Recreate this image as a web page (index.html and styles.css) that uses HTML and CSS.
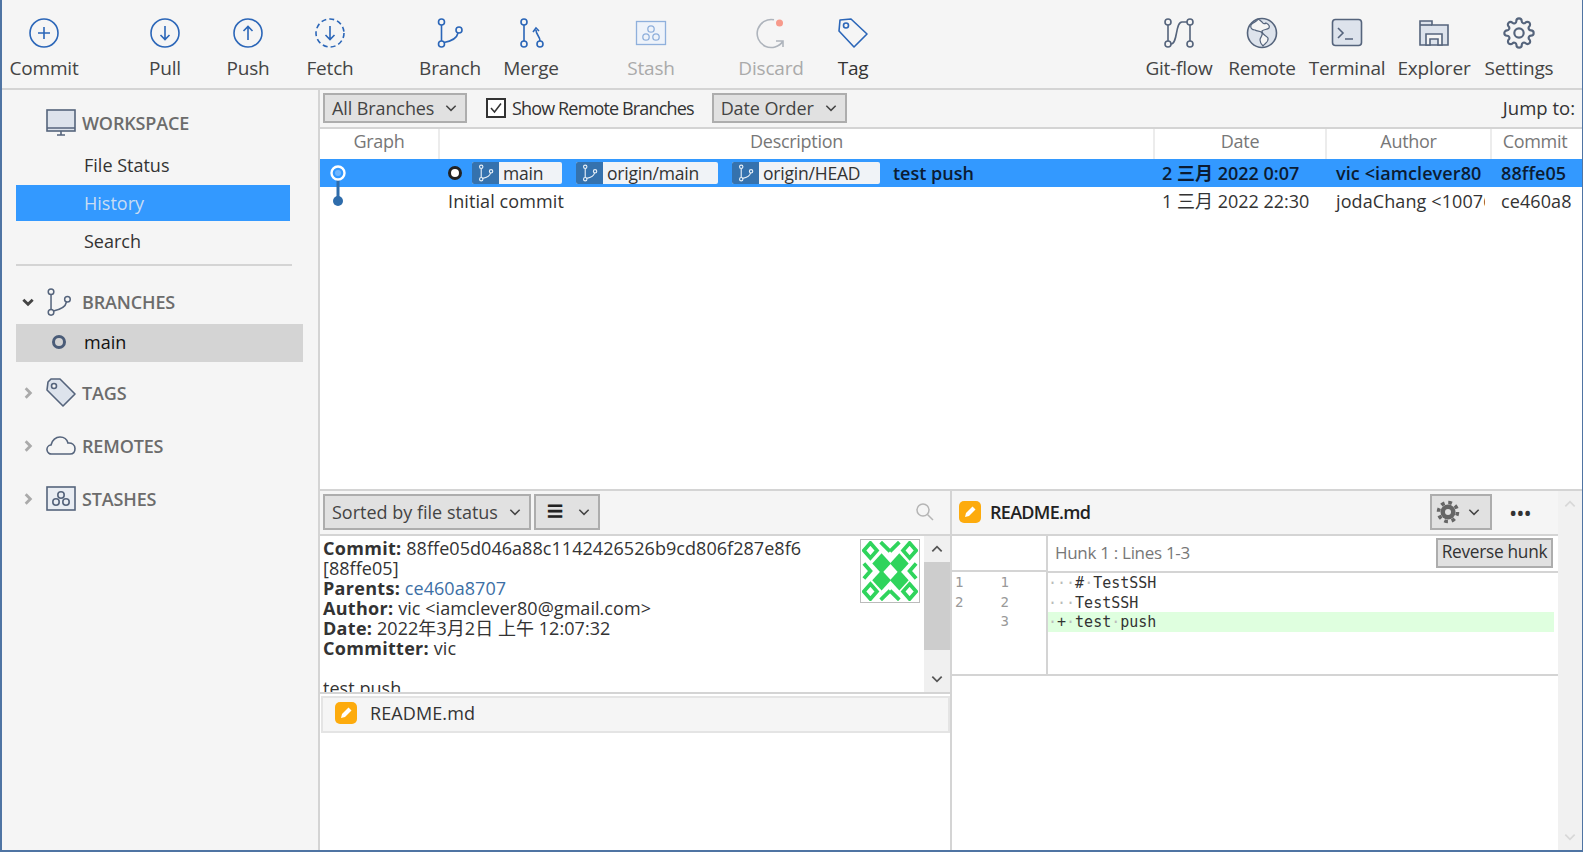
FILE: index.html
```html
<!DOCTYPE html>
<html lang="zh-Hant">
<head>
<meta charset="utf-8">
<title>Sourcetree</title>
<link rel="stylesheet" href="styles.css">
</head>
<body>
<svg class="defs" width="0" height="0" aria-hidden="true">
  <symbol id="branch" viewBox="0 0 32 32">
    <circle cx="7.500" cy="5" r="3"/><circle cx="7.500" cy="27" r="3"/><circle cx="25" cy="13" r="3"/>
    <path d="M7.500 8v16M10 25.500C18 24 23 21 24 16"/>
  </symbol>
  <symbol id="gear" viewBox="0 0 24 24">
    <path d="M19.400 15a1.650 1.650 0 0 0 .33 1.820l.06.06a2 2 0 0 1 0 2.830 2 2 0 0 1-2.830 0l-.06-.06a1.650 1.650 0 0 0-1.820-.33 1.650 1.650 0 0 0-1 1.510V21a2 2 0 0 1-2 2 2 2 0 0 1-2-2v-.09A1.650 1.650 0 0 0 9 19.400a1.650 1.650 0 0 0-1.820.33l-.06.06a2 2 0 0 1-2.830 0 2 2 0 0 1 0-2.830l.06-.06a1.650 1.650 0 0 0 .33-1.820 1.650 1.650 0 0 0-1.510-1H3a2 2 0 0 1-2-2 2 2 0 0 1 2-2h.09A1.650 1.650 0 0 0 4.600 9a1.650 1.650 0 0 0-.33-1.820l-.06-.06a2 2 0 0 1 0-2.830 2 2 0 0 1 2.830 0l.06.06a1.650 1.650 0 0 0 1.820.33H9a1.650 1.650 0 0 0 1-1.510V3a2 2 0 0 1 2-2 2 2 0 0 1 2 2v.09a1.650 1.650 0 0 0 1 1.510 1.650 1.650 0 0 0 1.820-.33l.06-.06a2 2 0 0 1 2.830 0 2 2 0 0 1 0 2.830l-.06.06a1.650 1.650 0 0 0-.33 1.820V9a1.650 1.650 0 0 0 1.510 1H21a2 2 0 0 1 2 2 2 2 0 0 1-2 2h-.09a1.650 1.650 0 0 0-1.510 1z"/>
  </symbol>
  <symbol id="chev-down" viewBox="0 0 12 12"><path d="M2 4l4 4 4-4"/></symbol>
  <symbol id="chev-right" viewBox="0 0 12 12"><path d="M4 2l4 4-4 4"/></symbol>
  <symbol id="pencil" viewBox="0 0 22 22">
    <rect x="0" y="0" width="22" height="22" rx="5" fill="#fdab0d"/>
    <path d="M6 16l1-4 6.500-6.500 3 3L10 15z" fill="#fff"/>
  </symbol>
  <symbol id="stashes" viewBox="0 0 30 26">
    <rect x="1" y="1" width="28" height="23"/>
    <circle cx="15" cy="9" r="3.200"/><circle cx="10" cy="16" r="3.200"/><circle cx="20" cy="16" r="3.200"/>
  </symbol>
</svg>

<div class="app">
  <header class="toolbar">
    <div class="tool"><svg class="tool-icon blue" viewBox="0 0 32 32"><circle cx="16" cy="16" r="14"/><path d="M16 10v12M10 16h12"/></svg><span>Commit</span></div>
    <div class="tool gap-wide"><svg class="tool-icon blue" viewBox="0 0 32 32"><circle cx="16" cy="16" r="14"/><path d="M16 9v13M11.500 18l4.500 4.500 4.500-4.500"/></svg><span>Pull</span></div>
    <div class="tool gap-3"><svg class="tool-icon blue" viewBox="0 0 32 32"><circle cx="16" cy="16" r="14"/><path d="M16 23V10M11.500 14l4.500-4.500 4.500 4.500"/></svg><span>Push</span></div>
    <div class="tool gap-2"><svg class="tool-icon blue" viewBox="0 0 32 32"><circle cx="16" cy="16" r="14" stroke-dasharray="5 3.100"/><path d="M16 9v13M11.500 18l4.500 4.500 4.500-4.500"/></svg><span>Fetch</span></div>
    <div class="tool gap-group"><svg class="tool-icon blue"><use href="#branch"/></svg><span>Branch</span></div>
    <div class="tool gap-1"><svg class="tool-icon blue" viewBox="0 0 32 32"><circle cx="9" cy="5" r="3"/><circle cx="9" cy="27" r="3"/><circle cx="25" cy="27" r="3"/><path d="M9 8v16M25 24c0-5-4-6-4-11M18 15l3-4 3 3"/></svg><span>Merge</span></div>
    <div class="tool gap-group disabled"><svg class="tool-icon pale" viewBox="0 0 32 32"><rect x="1.500" y="4.500" width="29" height="23" fill="#eef3fa"/><circle cx="16" cy="12" r="3.200"/><circle cx="11" cy="20" r="3.200"/><circle cx="21" cy="20" r="3.200"/></svg><span>Stash</span></div>
    <div class="tool gap-group disabled"><svg class="tool-icon grey" viewBox="0 0 32 32"><path d="M19 2.800A14 14 0 1 0 28 24M28 30v-6h-7"/><circle class="dot" cx="24.500" cy="6" r="3.500"/></svg><span>Discard</span></div>
    <div class="tool gap-2 tag-tool"><svg class="tool-icon blue" viewBox="0 0 32 32"><path d="M3 3l11-1 16 15-13 13L2 14z" stroke-linejoin="round"/><circle cx="9" cy="8.500" r="2.500"/></svg><span>Tag</span></div>
    <div class="tool push-right"><svg class="tool-icon slate" viewBox="0 0 32 32"><circle cx="5" cy="5" r="3"/><circle cx="5" cy="27" r="3"/><circle cx="27" cy="5" r="3"/><circle cx="27" cy="27" r="3"/><path d="M5 8v16M27 8v16M8 27c7 0 4-22 11-22h5"/></svg><span>Git-flow</span></div>
    <div class="tool gap-3"><svg class="tool-icon slate" viewBox="0 0 32 32"><circle cx="16" cy="16" r="14.500" fill="#dde3ec"/><path class="solid" d="M12 2c-1 3-5 3-7 6-1 3 1 5 4 5 2 2 6 0 7 3 1 3-2 4-2 7s2 5 3 6c2-3 6-4 5-8-2-3-6-3-6-7 2-2 5-1 7-3 1-2-1-4-3-5-1 1-3 1-4-1-1-1-2-2-4-3z"/></svg><span>Remote</span></div>
    <div class="tool gap-5"><svg class="tool-icon slate" viewBox="0 0 32 32"><rect x="1.500" y="2.500" width="29" height="26" rx="3" fill="#dde3ec"/><path d="M7 11l5 5-5 5M14 22h8"/></svg><span>Terminal</span></div>
    <div class="tool gap-7"><svg class="tool-icon slate" viewBox="0 0 32 32"><path d="M2 28V4h12v4h16v20z" fill="#dde3ec"/><path d="M2 8h12"/><path class="fill-slate" d="M8 28V17h16v11h-4v-6h-8v6z"/></svg><span>Explorer</span></div>
    <div class="tool gap-5"><svg class="tool-icon slate" viewBox="0 0 24 24"><use href="#gear"/><circle cx="12" cy="12" r="3.500"/></svg><span>Settings</span></div>
  </header>

  <div class="main">
    <aside class="sidebar">
      <div class="side-head first">
        <span class="chev"></span>
        <svg class="side-icon slate" viewBox="0 0 30 28"><rect x="1" y="1" width="28" height="21" fill="#dde3ec"/><path d="M1 19h28M11 26h8M15 22v4"/></svg>
        <span>WORKSPACE</span>
      </div>
      <div class="nav-item file-status">File Status</div>
      <div class="nav-item active">History</div>
      <div class="nav-item search">Search</div>
      <div class="side-rule"></div>
      <div class="side-head branches">
        <svg class="chev down"><use href="#chev-down"/></svg>
        <svg class="side-icon slate branch-icon"><use href="#branch"/></svg>
        <span>BRANCHES</span>
      </div>
      <div class="branch-row"><span class="ring"></span><span>main</span></div>
      <div class="side-head tags">
        <svg class="chev"><use href="#chev-right"/></svg>
        <svg class="side-icon slate" viewBox="0 0 30 30"><path d="M2 4l3-3 9 0 15 15-12 12L1 12z" fill="#dde3ec" stroke-linejoin="round"/><circle cx="8" cy="8" r="2.500" fill="#f5f5f5"/></svg>
        <span>TAGS</span>
      </div>
      <div class="side-head remotes">
        <svg class="chev"><use href="#chev-right"/></svg>
        <svg class="side-icon slate" viewBox="0 0 30 20"><path d="M6 18a4.500 4.500 0 0 1-1-9C6 4 10 1 14 1c4 0 7 2.500 8 6 4-.5 7 2 7 5.500s-2 5.500-5 5.500z"/></svg>
        <span>REMOTES</span>
      </div>
      <div class="side-head stashes">
        <svg class="chev"><use href="#chev-right"/></svg>
        <svg class="side-icon slate filled"><use href="#stashes"/></svg>
        <span>STASHES</span>
      </div>
    </aside>

    <section class="content">
      <div class="filterbar">
        <div class="select all-branches">All Branches<svg class="caret"><use href="#chev-down"/></svg></div>
        <label class="check"><span class="box"><svg viewBox="0 0 16 16"><path d="M3 8l3.500 4L13 3.500"/></svg></span>Show Remote Branches</label>
        <div class="select date-order">Date Order<svg class="caret"><use href="#chev-down"/></svg></div>
        <span class="jump">Jump to:</span>
      </div>

      <div class="table">
        <div class="thead">
          <div>Graph</div><div>Description</div><div>Date</div><div>Author</div><div class="th-commit">Commit</div>
        </div>
        <div class="row selected">
          <div class="graph"><svg viewBox="0 0 36 28"><path d="M18 20v22"/><circle class="ring-w" cx="18" cy="14" r="6.500"/><circle class="core" cx="18" cy="14" r="3"/></svg></div>
          <div class="desc">
            <span class="head-dot"></span>
            <span class="tag t1"><span class="tag-ico"><svg><use href="#branch"/></svg></span>main</span>
            <span class="tag t2"><span class="tag-ico"><svg><use href="#branch"/></svg></span>origin/main</span>
            <span class="tag t3"><span class="tag-ico"><svg><use href="#branch"/></svg></span>origin/HEAD</span>
            <span class="msg">test push</span>
          </div>
          <div class="cell date">2 三月 2022 0:07</div>
          <div class="cell">vic &lt;iamclever80</div>
          <div class="cell">88ffe05</div>
        </div>
        <div class="row">
          <div class="graph"><svg viewBox="0 0 36 28"><circle class="node" cx="18" cy="14" r="5"/></svg></div>
          <div class="desc plain">Initial commit</div>
          <div class="cell date">1 三月 2022 22:30</div>
          <div class="cell author-clip">jodaChang &lt;1007654321@qq.com&gt;</div>
          <div class="cell">ce460a8</div>
        </div>
      </div>

      <div class="lower">
        <div class="left-pane">
          <div class="pane-bar">
            <div class="select sort">Sorted by file status<svg class="caret"><use href="#chev-down"/></svg></div>
            <div class="select view"><span class="lines">☰</span><svg class="caret"><use href="#chev-down"/></svg></div>
            <svg class="search-icon" viewBox="0 0 20 20"><circle cx="8" cy="8" r="6"/><path d="M12.500 12.500L18 18"/></svg>
          </div>
          <div class="details">
            <div class="details-text">
              <div class="avatar">
                <svg viewBox="0 0 60 64">
                  <g class="av-solid">
                    <path d="M21 13l10 11-10 11-10-11z"/><path d="M40 13l10 11-10 11-10-11z"/>
                    <path d="M21 31l10 11-10 11-10-11z"/><path d="M40 31l10 11-10 11-10-11z"/>
                  </g>
                  <g class="av-line">
                    <path d="M9 2l7 8-7 8-7-8z"/><path d="M51 2l7 8-7 8-7-8z"/>
                    <path d="M9 46l7 8-7 8-7-8z"/><path d="M51 46l7 8-7 8-7-8z"/>
                    <path d="M20 1l10 10M40 1L30 11M20 63l10-10M40 63L30 53"/>
                    <path d="M2 24l7 8-7 8M58 24l-7 8 7 8"/>
                  </g>
                </svg>
              </div>
              <div class="meta">
                <b>Commit:</b> 88ffe05d046a88c1142426526b9cd806f287e8f6<br>
                [88ffe05]<br>
                <b>Parents:</b> <a class="link">ce460a8707</a><br>
                <b>Author:</b> vic &lt;iamclever80@gmail.com&gt;<br>
                <b>Date:</b> 2022年3月2日 上午 12:07:32<br>
                <b>Committer:</b> vic<br>
                <br>
                test push
              </div>
            </div>
            <div class="scroll">
              <div class="sb-btn"><svg><use href="#chev-down" class="flip"/></svg></div>
              <div class="sb-thumb"></div>
              <div class="sb-track"></div>
              <div class="sb-btn"><svg><use href="#chev-down"/></svg></div>
            </div>
          </div>
          <div class="files">
            <div class="file-row"><svg class="pencil"><use href="#pencil"/></svg><span>README.md</span></div>
          </div>
        </div>

        <div class="right-pane">
          <div class="diff">
            <div class="pane-bar file-bar">
              <svg class="pencil"><use href="#pencil"/></svg>
              <span class="file-name">README.md</span>
              <div class="select gear-btn"><svg class="gear-fill" viewBox="0 0 24 24"><circle cx="12" cy="12" r="7.500"/><circle class="teeth" cx="12" cy="12" r="9.500"/><circle class="hole" cx="12" cy="12" r="3"/></svg><svg class="caret"><use href="#chev-down"/></svg></div>
              <span class="dots">•••</span>
            </div>
            <div class="hunk">
              <div class="gutter">
                <div class="g-head"></div>
                <div class="g-line"><span>1</span><span>1</span></div>
                <div class="g-line"><span>2</span><span>2</span></div>
                <div class="g-line"><span></span><span>3</span></div>
              </div>
              <div class="code">
                <div class="hunk-head"><span>Hunk 1 : Lines 1-3</span><button class="reverse">Reverse hunk</button></div>
                <div class="line"><i>···</i>#<i>·</i>TestSSH</div>
                <div class="line"><i>···</i>TestSSH</div>
                <div class="line added"><i>·</i>+<i>·</i>test<i>·</i>push</div>
              </div>
            </div>
          </div>
          <div class="scroll faint">
            <div class="sb-btn"><svg><use href="#chev-down" class="flip"/></svg></div>
            <div class="sb-track"></div>
            <div class="sb-btn"><svg><use href="#chev-down"/></svg></div>
          </div>
        </div>
      </div>
    </section>
  </div>
</div>
</body>
</html>
```

FILE: styles.css
```css
* { box-sizing: border-box; }
html, body { margin: 0; height: 100%; overflow: hidden; }
body {
  background: #f5f5f5;
  color: #333;
  font-family: "Open Sans", "Noto Sans", "Noto Sans CJK TC", sans-serif;
  font-size: 18px;
  letter-spacing: -0.3px;
}
.defs { position: absolute; }
svg { display: block; fill: none; }
symbol { overflow: visible; }

.app {
  display: flex;
  flex-direction: column;
  height: 100vh;
  border-left: 2px solid #4f74a3;
  border-right: 1px solid #4f74a3;
  border-bottom: 2px solid #4f74a3;
}

/* toolbar */
.toolbar {
  display: flex;
  flex: none;
  height: 90px;
  padding-left: 2px;
  border-bottom: 2px solid #d4d4d4;
}
.tool {
  width: 80px;
  flex: none;
  display: flex;
  flex-direction: column;
  align-items: center;
  padding-top: 17px;
  color: #444;
  font-size: 19px;
  letter-spacing: -0.2px;
  line-height: 26px;
}
.tool span { margin-top: 6px; }
.tool-icon { width: 32px; height: 32px; stroke-width: 1.600; }
.gap-group { margin-left: 40px; }
.gap-wide { margin-left: 41px; }
.gap-1 { margin-left: 1px; }
.gap-2 { margin-left: 2px; }
.gap-3 { margin-left: 3px; }
.gap-5 { margin-left: 5px; }
.gap-7 { margin-left: 7px; }
.push-right { margin-left: 246px; }
.disabled { color: #aaa; }
.tag-tool { color: #333; }
.blue { stroke: #2b66b8; }
.pale { stroke: #8fb0dc; stroke-width: 1.300; }
.grey { stroke: #aeb4bc; }
.dot { fill: #f79a8b; stroke: none; }
.slate { stroke: #55647c; }
.solid { fill: #f5f5f5; stroke: #55647c; stroke-width: 1.200; }
.fill-slate { fill: #f5f5f5; }

/* main */
.main { flex: 1; display: flex; min-height: 0; }
.sidebar {
  width: 318px;
  flex: none;
  padding: 14px 0 0 14px;
  border-right: 2px solid #d4d4d4;
}
.side-head {
  display: flex;
  align-items: center;
  height: 38px;
  font-weight: 600;
  color: #6c6c6c;
  font-size: 18px;
  letter-spacing: -0.15px;
}
.side-head .chev {
  width: 14px;
  height: 14px;
  margin: 0 11px 0 5px;
  stroke: #aaa;
  stroke-width: 2.400;
  flex: none;
}
.side-head .chev.down { stroke: #444; }
.side-icon { width: 30px; height: 30px; margin-right: 6px; flex: none; stroke-width: 1.600; }
.branch-icon { margin-left: -2px; margin-right: 8px; }
.filled { fill: #e9edf3; }
.side-head.branches { margin-top: 17px; }
.side-head.tags { margin-top: 12px; }
.side-head.remotes { margin-top: 15px; }
.side-head.stashes { margin-top: 15px; }
.nav-item {
  display: flex;
  align-items: center;
  width: 274px;
  padding-left: 68px;
  color: #333;
  letter-spacing: 0;
}
.file-status { height: 40px; margin-top: 3px; }
.active { height: 36px; background: #3399ff; color: #c9ddf3; }
.search { height: 40px; }
.side-rule { width: 276px; height: 2px; margin-top: 3px; background: #d4d4d4; }
.branch-row {
  display: flex;
  align-items: center;
  width: 287px;
  height: 38px;
  margin-top: 3px;
  padding: 0 0 2px 36px;
  background: #d4d4d4;
  color: #111;
  font-weight: 500;
  letter-spacing: 0;
}
.ring {
  width: 14px;
  height: 14px;
  margin-right: 18px;
  border: 3.500px solid #4a5c78;
  border-radius: 50%;
}

/* content */
.content { flex: 1; min-width: 0; display: flex; flex-direction: column; }
.filterbar {
  display: flex;
  align-items: center;
  flex: none;
  height: 37px;
  padding: 0 7px 2px 3px;
}
.select {
  display: flex;
  align-items: center;
  justify-content: space-between;
  height: 30px;
  padding: 0 7px 0 7px;
  background: #e1e1e1;
  border: 2px solid #adadad;
  color: #444;
  letter-spacing: -0.1px;
}
.caret { width: 14px; height: 14px; stroke: #444; stroke-width: 1.300; flex: none; }
.all-branches { width: 144px; }
.date-order { width: 135px; margin-left: 18px; }
.check { display: flex; align-items: center; margin-left: 19px; color: #333; letter-spacing: -0.85px; }
.box {
  width: 20px;
  height: 20px;
  margin-right: 6px;
  background: #fff;
  border: 2px solid #333;
}
.box svg { stroke: #333; stroke-width: 1.500; }
.jump { margin-left: auto; color: #333; font-size: 18.500px; letter-spacing: 0; }

/* commit table */
.table {
  flex: none;
  height: 362px;
  background: #fff;
  border-top: 2px solid #d4d4d4;
}
.thead, .row {
  display: grid;
  grid-template-columns: 120px 715px 172px 165px 1fr;
}
.thead { height: 30px; color: #777; text-align: center; line-height: 25px; background: #fff; }
.thead > div { border-right: 2px solid #ececec; }
.thead > .th-commit { border-right: 0; padding-right: 4px; }
.row { height: 28px; line-height: 28px; color: #333; letter-spacing: 0.1px; }
.selected { background: #3399ff; color: #0b1c33; font-weight: 600; }
.graph svg { width: 36px; height: 28px; overflow: visible; stroke: #2e6cab; stroke-width: 3; }
.ring-w { fill: none; stroke: #fff; stroke-width: 2.400; }
.core { fill: #6fb6ff; stroke: none; }
.node { fill: #2e6cab; stroke: none; }
.desc { display: flex; align-items: center; padding-left: 8px; overflow: hidden; }
.desc.plain { padding-left: 8px; }
.cell { padding-left: 9px; white-space: nowrap; overflow: hidden; }
.cell.date { padding-left: 7px; letter-spacing: 0; }
.author-clip { margin-right: 7px; }
.head-dot {
  width: 14px;
  height: 14px;
  flex: none;
  margin-right: 10px;
  background: #fff;
  border: 3.500px solid #222;
  border-radius: 50%;
}
.tag {
  display: flex;
  align-items: center;
  height: 22px;
  flex: none;
  margin-right: 14px;
  background: #f0f3f7;
  border-radius: 2px;
  color: #333;
  font-size: 17.500px;
  font-weight: 400;
  letter-spacing: -0.2px;
  line-height: 22px;
}
.tag-ico {
  display: flex;
  align-items: center;
  justify-content: center;
  width: 27px;
  height: 22px;
  margin-right: 4px;
  background: #3572ae;
  border-radius: 2px 0 0 2px;
}
.tag-ico svg { width: 18px; height: 18px; stroke: #e8f0f8; stroke-width: 2; }
.t1 { width: 90px; }
.t2 { width: 142px; }
.t3 { width: 148px; }
.msg { color: #0b1c33; letter-spacing: 0; margin-left: -1px; }

/* lower panes */
.lower {
  flex: 1;
  min-height: 0;
  display: flex;
  border-top: 2px solid #d4d4d4;
}
.left-pane {
  width: 632px;
  flex: none;
  display: flex;
  flex-direction: column;
  border-right: 2px solid #d4d4d4;
}
.pane-bar {
  display: flex;
  align-items: center;
  flex: none;
  height: 45px;
  padding: 0 0 2px 3px;
  border-bottom: 2px solid #d4d4d4;
}
.pane-bar .select { height: 36px; }
.sort { width: 208px; font-size: 18px; letter-spacing: 0; }
.view { width: 66px; margin-left: 3px; padding-left: 11px; }
.lines { font-size: 16px; color: #222; }
.search-icon { width: 20px; height: 20px; margin-left: auto; margin-right: 15px; stroke: #b5b5b5; stroke-width: 1.500; }
.details { display: flex; flex: none; height: 156px; background: #fff; }
.details-text { flex: 1; min-width: 0; overflow: hidden; padding: 2px 0 0 3px; font-size: 18px; line-height: 20px; color: #333; letter-spacing: 0.05px; }
.meta b { font-weight: 700; letter-spacing: 0.3px; }
.link { color: #3d6fa5; }
.avatar {
  float: right;
  width: 60px;
  height: 64px;
  margin: 1px 4px 0 0;
  padding: 1px;
  background: #fff;
  border: 1px solid #bbb;
}
.avatar svg { width: 100%; height: 100%; }
.av-solid { fill: #2fd45c; }
.av-line { fill: none; stroke: #2fd45c; stroke-width: 4; }
.scroll { width: 26px; flex: none; display: flex; flex-direction: column; background: #f0f0f0; }
.sb-btn { height: 26px; flex: none; display: flex; align-items: center; justify-content: center; }
.sb-btn svg { width: 14px; height: 14px; stroke: #555; stroke-width: 1.500; }
.flip { transform: rotate(180deg); transform-origin: 7px 7px; }
.sb-thumb { height: 88px; flex: none; background: #cdcdcd; }
.sb-track { flex: 1; }
.files { flex: 1; background: #fff; border-top: 2px solid #d4d4d4; padding: 2px 0 0 1px; }
.file-row {
  display: flex;
  align-items: center;
  height: 37px;
  width: 629px;
  padding: 0 0 3px 12px;
  background: #f5f5f5;
  border: 2px solid #e4e4e4;
  font-size: 18px;
  color: #333;
  letter-spacing: 0.1px;
}
.pencil { width: 22px; height: 22px; flex: none; margin-right: 13px; }

.right-pane { flex: 1; min-width: 0; display: flex; }
.diff { flex: 1; min-width: 0; display: flex; flex-direction: column; background: #fff; }
.file-bar { background: #f5f5f5; padding: 0 0 2px 7px; }
.file-bar .pencil { margin-right: 9px; }
.file-name { font-weight: 600; color: #222; letter-spacing: -0.7px; }
.gear-btn { width: 62px; margin-left: auto; padding: 0 9px 0 4px; }
.gear-fill { width: 24px; height: 24px; fill: #666; }
.gear-fill .teeth { fill: none; stroke: #666; stroke-width: 3.500; stroke-dasharray: 3.700 3.760; }
.gear-fill .hole { fill: #e1e1e1; }
.dots { width: 66px; flex: none; text-align: center; padding-right: 10px; color: #333; font-size: 22px; line-height: 1; letter-spacing: -1px; }
.hunk { display: flex; height: 140px; border-bottom: 2px solid #d4d4d4; }
.gutter { width: 96px; flex: none; border-right: 2px solid #d4d4d4; color: #999; font-size: 15px; }
.g-head { height: 36px; border-bottom: 2px solid #d4d4d4; }
.g-line { display: flex; height: 19.500px; line-height: 20px; padding-left: 3px; font-family: "DejaVu Sans Mono", monospace; font-size: 14px; letter-spacing: 0; }
.g-line span { width: 46px; }
.code { flex: 1; min-width: 0; display: flex; flex-direction: column; }
.hunk-head {
  display: flex;
  align-items: center;
  justify-content: space-between;
  height: 37px;
  padding: 0 5px 2px 7px;
  border-bottom: 2px solid #d4d4d4;
  color: #777;
  font-size: 17px;
}
.reverse {
  width: 117px;
  height: 30px;
  padding: 0 0 2px;
  background: #e1e1e1;
  border: 2px solid #adadad;
  font: inherit;
  font-size: 17.300px;
  letter-spacing: -0.3px;
  white-space: nowrap;
  color: #333;
}
.line {
  height: 20px;
  line-height: 20px;
  padding-left: 0;
  font-family: "DejaVu Sans Mono", monospace;
  font-size: 15px;
  letter-spacing: 0;
  color: #333;
  white-space: pre;
}
.line i { font-style: normal; color: #bbb; }
.added { background: #dfffdf; margin: -1px 4px 1px 0; }
.faint .sb-btn svg { stroke: #d8d8d8; }
.faint { width: 24px; background: #f1f1f1; }
```
